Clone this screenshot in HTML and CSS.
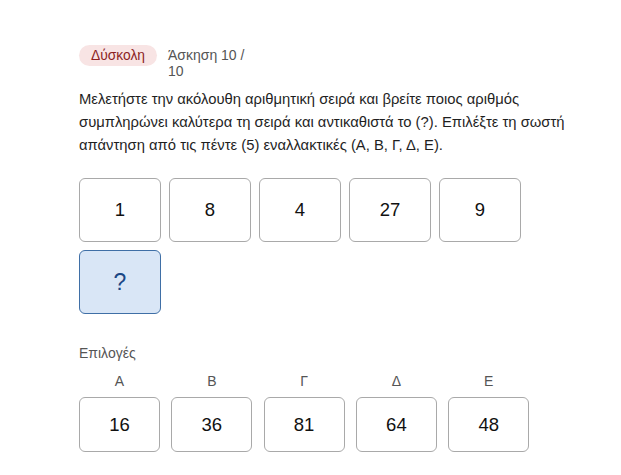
FILE: index.html
```html
<!DOCTYPE html>
<html lang="el">
<head>
<meta charset="utf-8">
<link rel="stylesheet" href="styles.css">
</head>
<body>
<main class="quiz">
  <header class="quiz-head">
    <span class="badge">Δύσκολη</span>
    <span class="counter">Άσκηση 10 / 10</span>
  </header>
  <p class="prompt">Μελετήστε την ακόλουθη αριθμητική σειρά και βρείτε ποιος αριθμός συμπληρώνει καλύτερα τη σειρά και αντικαθιστά το (?). Επιλέξτε τη σωστή απάντηση από τις πέντε (5) εναλλακτικές (Α, Β, Γ, Δ, Ε).</p>
  <div class="sequence">
    <div class="cell">1</div>
    <div class="cell">8</div>
    <div class="cell">4</div>
    <div class="cell">27</div>
    <div class="cell">9</div>
    <div class="cell cell-missing">?</div>
  </div>
  <div class="options-title">Επιλογές</div>
  <div class="options">
    <div class="option"><span class="option-label">Α</span><div class="option-box">16</div></div>
    <div class="option"><span class="option-label">Β</span><div class="option-box">36</div></div>
    <div class="option"><span class="option-label">Γ</span><div class="option-box">81</div></div>
    <div class="option"><span class="option-label">Δ</span><div class="option-box">64</div></div>
    <div class="option"><span class="option-label">Ε</span><div class="option-box">48</div></div>
  </div>
</main>
</body>
</html>
```
FILE: styles.css
```css
html, body {
  margin: 0;
  padding: 0;
  background: #ffffff;
}
body {
  font-family: "Liberation Sans", Arial, sans-serif;
  color: #1a1a1a;
}
.quiz {
  padding: 45px 0 0 79px;
  display: flex;
  flex-direction: column;
  align-items: flex-start;
}
.quiz-head {
  display: flex;
  align-items: flex-start;
  gap: 11px;
}
.badge {
  background: #f8e4e4;
  color: #8c1f1f;
  font-size: 13.8px;
  line-height: 21px;
  padding: 0 12px;
  border-radius: 11px;
}
.counter {
  width: 84px;
  font-size: 14px;
  line-height: 16px;
  color: #555555;
  margin-top: 2px;
}
.prompt {
  margin: 9px 0 0 0;
  width: 505px;
  font-size: 14.8px;
  line-height: 23px;
  color: #1f1f1f;
}
.sequence {
  margin-top: 21px;
  display: grid;
  grid-template-columns: repeat(5, 82px);
  gap: 8px;
}
.cell {
  box-sizing: border-box;
  height: 64px;
  border: 1px solid #a9a9a9;
  border-radius: 6px;
  display: flex;
  align-items: center;
  justify-content: center;
  font-size: 18.5px;
  color: #111111;
}
.cell-missing {
  background: #d9e6f6;
  border-color: #3f6fa6;
  color: #1b4785;
  font-size: 23px;
}
.options-title {
  margin-top: 31px;
  font-size: 14px;
  line-height: 16px;
  color: #555555;
}
.options {
  margin-top: 12px;
  display: grid;
  grid-template-columns: repeat(5, 81px);
  column-gap: 11.3px;
}
.option {
  display: flex;
  flex-direction: column;
  align-items: stretch;
  gap: 8px;
}
.option-label {
  text-align: center;
  font-size: 14px;
  line-height: 16px;
  color: #555555;
}
.option-box {
  box-sizing: border-box;
  height: 55px;
  border: 1px solid #a9a9a9;
  border-radius: 6px;
  display: flex;
  align-items: center;
  justify-content: center;
  font-size: 18.5px;
  color: #111111;
}
```
